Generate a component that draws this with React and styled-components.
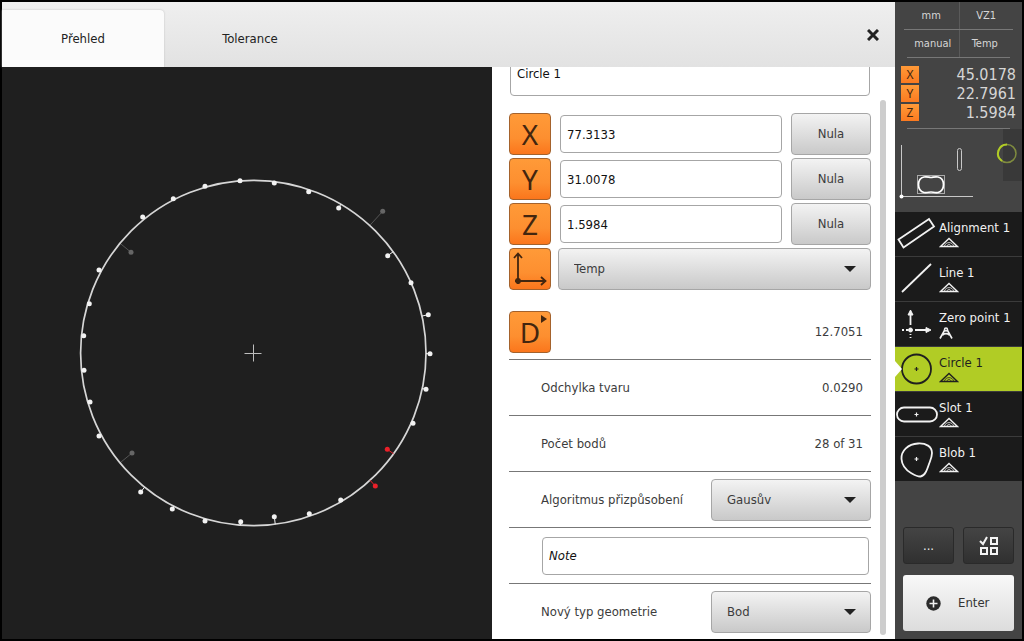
import React, { useState } from "react";
import styled, { createGlobalStyle, css } from "styled-components";

const CENTER = { x: 253.3, y: 353 };
const RADIUS = 172.7;

const POINTS = [
  [240, 180.7], [205, 186.3], [173.3, 198.7], [142.7, 217], [99, 270],
  [89.3, 303.7], [83.7, 335.7], [84, 370.3], [90, 402], [99, 436],
  [140.7, 492], [172.3, 509], [205, 521], [240.7, 521.7], [274.3, 516.7],
  [309.3, 513.7], [340.7, 500], [413, 423.3], [426, 389.3], [430, 353.7],
  [428.3, 314.7], [411, 282.7], [387.7, 255.7], [338.7, 208],
  [308.7, 191.7], [274.3, 183],
];
const IGNORED = [[131, 252.3], [132, 453], [382.7, 211.3]];
const OUTLIERS = [[387.3, 449.3], [375.3, 486]];

const Point = ({ at: [x, y], color, stem }) => {
  const angle = Math.atan2(y - CENTER.y, x - CENTER.x);
  return (
    <g>
      <line
        x1={x}
        y1={y}
        x2={CENTER.x + RADIUS * Math.cos(angle)}
        y2={CENTER.y + RADIUS * Math.sin(angle)}
        stroke={stem || color}
      />
      <circle cx={x} cy={y} r="2.5" fill={color} />
    </g>
  );
};

const Plot = () => (
  <svg viewBox="2 67 490 572" width="100%" height="100%" role="img" aria-label="Circle 1">
    {IGNORED.map((p) => (
      <Point key={p} at={p} color="#666" stem="#555" />
    ))}
    <circle cx={CENTER.x} cy={CENTER.y} r={RADIUS} fill="none" stroke="#d6d6d6" strokeWidth="1.7" />
    {POINTS.map((p) => (
      <Point key={p} at={p} color="#f2f2f2" />
    ))}
    {OUTLIERS.map((p) => (
      <Point key={p} at={p} color="#ea2029" />
    ))}
    <path d="M244.5 353.5h17M253.5 344.5v17" stroke="#bdbdbd" />
  </svg>
);

const MiniMap = () => (
  <Map viewBox="0 0 127 83" aria-hidden="true">
    <rect x="108" y="0" width="19" height="52" fill="#393939" />
    <path d="M6.5 16v50M6 67.5h72" stroke="#c8c8c8" fill="none" />
    <circle cx="6.5" cy="67.5" r="2" fill="#fff" />
    <rect x="62.5" y="19.500" width="4" height="22" rx="2" fill="none" stroke="#c8c8c8" />
    <rect x="22.5" y="46.5" width="27" height="18" fill="none" stroke="#aaa" />
    <path
      d="M29 48c3-.8 5 .5 7 .5s4-1.300 7-.5c4 1 5.500 4 5.500 7.500s-1.500 7-5.500 8c-3 .5-5-.5-7-.5s-4 1-7 .5c-4-1-5.500-4.500-5.500-8S25 49 29 48Z"
      fill="none"
      stroke="#fff"
      strokeWidth="1.700"
    />
    <circle cx="112" cy="24.500" r="9" fill="none" stroke="#7f8b3f" strokeWidth="1.500" />
    <path d="M112 15.500a9 9 0 0 0-5 16.500" fill="none" stroke="#b1cc25" strokeWidth="2" />
  </Map>
);

const SHAPES = {
  alignment: <path d="M3.5 27.5 34 7l5 7.500L8.500 35.500Z" />,
  line: <path d="M7 35 36 7" />,
  zero: (
    <>
      <path d="M15.500 23V10M20 28h14M7 28h2M11 28h2M15.500 32v1M15.500 35v1" />
      <path d="m13 13 2.500-5 2.500 5ZM31 25.500l5 2.500-5 2.500Z" fill="currentColor" strokeWidth="1" />
      <circle cx="15.500" cy="28" r="2" fill="currentColor" strokeWidth="1" />
    </>
  ),
  circle: (
    <>
      <circle cx="21.500" cy="22" r="14.500" />
      <path d="M19.500 22h4M21.500 20v4" strokeWidth="1.200" />
    </>
  ),
  slot: (
    <>
      <rect x="2" y="15.500" width="40" height="14" rx="7" />
      <path d="M19.500 22.500h4M21.500 20.500v4" strokeWidth="1.200" />
    </>
  ),
  blob: (
    <>
      <path d="M6.500 22C6 14 13 7 23 6.500c8-.5 14 3 14 9.500 0 4-1 6-3 11-2 6-4 12-8.500 12.500-3 .3-6-1.500-9.500-3.500-5-3-9-6.500-9.500-14Z" />
      <path d="M19.500 22h4M21.500 20v4" strokeWidth="1.200" />
    </>
  ),
};

const MeasuredIcon = () => (
  <svg width="20" height="11" viewBox="0 0 20 11" fill="none" stroke="currentColor" aria-hidden="true">
    <path d="M1.500 9.500 10 1.500l8.500 8Z" strokeWidth="1.400" />
    <path d="M5.500 9c1-4.500 8-4.500 9 0M8 9c.5-2 3.500-2 4 0" strokeWidth=".8" />
  </svg>
);

const CompassIcon = () => (
  <svg width="14" height="12" viewBox="0 0 14 12" fill="none" stroke="currentColor" aria-hidden="true">
    <path d="m1 11.500 5-9M13 11.500l-5-9M3.500 8c2-1.500 5-1.500 7 0" strokeWidth="1.600" />
    <circle cx="7" cy="2.500" r="1.500" strokeWidth="1.500" />
  </svg>
);

const FEATURES = [
  { name: "Alignment 1", shape: "alignment" },
  { name: "Line 1", shape: "line" },
  { name: "Zero point 1", shape: "zero" },
  { name: "Circle 1", shape: "circle" },
  { name: "Slot 1", shape: "slot" },
  { name: "Blob 1", shape: "blob" },
];

const Select = ({ id, label, value }) => (
  <SelectBox>
    <select id={id} aria-label={label} defaultValue={value}>
      <option>{value}</option>
    </select>
    <svg width="12" height="6" viewBox="0 0 12 6" aria-hidden="true">
      <path d="M0 0h12L6 6Z" fill="#222" />
    </svg>
  </SelectBox>
);

const Details = () => {
  const [coords, setCoords] = useState({ X: "77.3133", Y: "31.0078", Z: "1.5984" });

  return (
    <Form onSubmit={(e) => e.preventDefault()}>
      <Fields>
        <NameInput aria-label="Name" defaultValue="Circle 1" />

        <Coordinates>
          {Object.keys(coords).map((axis) => (
            <CoordRow key={axis}>
              <Tile as="label" htmlFor={`axis-${axis}`}>
                {axis}
              </Tile>
              <TextInput
                id={`axis-${axis}`}
                value={coords[axis]}
                onChange={(e) => setCoords({ ...coords, [axis]: e.target.value })}
              />
              <LightButton
                type="button"
                onClick={() => setCoords({ ...coords, [axis]: "0.0000" })}>
                Nula
              </LightButton>
            </CoordRow>
          ))}
          <SystemRow>
            <Tile as="label" htmlFor="system">
              <svg width="40" height="40" viewBox="0 0 40 40" fill="none" stroke="#43260f" strokeWidth="1.800" aria-hidden="true">
                <path d="M8 35V5M4 9l4-4.500L12 9M5 32h30M31 28l4.500 4L31 36" />
                <circle cx="8" cy="32" r="2" fill="#43260f" />
              </svg>
            </Tile>
            <Select id="system" label="Temp" value="Temp" />
          </SystemRow>
        </Coordinates>

        <DiameterRow>
          <Tile type="button">
            D
            <TileArrow viewBox="0 0 6 8" aria-hidden="true">
              <path d="M0 0 6 4 0 8Z" fill="#43260f" />
            </TileArrow>
          </Tile>
          <Value>12.7051</Value>
        </DiameterRow>
        <Row>
          <span>Odchylka tvaru</span>
          <Value>0.0290</Value>
        </Row>
        <Row>
          <span>Počet bodů</span>
          <Value>28 of 31</Value>
        </Row>
        <Row>
          <label htmlFor="fit">Algoritmus přizpůsobení</label>
          <Select id="fit" value="Gausův" />
        </Row>
        <Row>
          <NoteInput aria-label="Note" placeholder="Note" />
        </Row>
        <Row>
          <label htmlFor="geometry">Nový typ geometrie</label>
          <Select id="geometry" value="Bod" />
        </Row>
      </Fields>
      <ScrollThumb />
    </Form>
  );
};

const Sidebar = () => {
  const [active, setActive] = useState("Circle 1");

  return (
    <Side>
      <Status>
        <button>mm</button>
        <button>VZ1</button>
      </Status>
      <Status $inset>
        <button>manual</button>
        <button>Temp</button>
      </Status>

      <Positions>
        <dt>X</dt>
        <dd>45.0178</dd>
        <dt>Y</dt>
        <dd>22.7961</dd>
        <dt>Z</dt>
        <dd>1.5984</dd>
      </Positions>
      <MiniMap />

      <FeatureList>
        {FEATURES.map(({ name, shape }) => (
          <li key={name}>
            <Feature $active={name === active} onClick={() => setActive(name)}>
              <svg width="44" height="44" viewBox="0 0 44 44" fill="none" stroke="currentColor" strokeWidth="1.800" aria-hidden="true">
                {SHAPES[shape]}
              </svg>
              <FeatureText>
                {name}
                {shape === "zero" ? <CompassIcon /> : <MeasuredIcon />}
              </FeatureText>
            </Feature>
          </li>
        ))}
      </FeatureList>

      <Actions>
        <DarkButton>...</DarkButton>
        <DarkButton aria-label="Select features">
          <svg width="20" height="20" viewBox="0 0 20 20" fill="none" stroke="#f4f4f4" strokeWidth="2" aria-hidden="true">
            <path d="m1 5 3 3 4-7" />
            <path d="M12 2h6v6h-6ZM2 12h6v6H2ZM12 12h6v6h-6Z" />
          </svg>
        </DarkButton>
        <EnterButton>
          <svg width="15" height="15" viewBox="0 0 15 15" aria-hidden="true">
            <circle cx="7.500" cy="7.500" r="7.200" fill="#2b2b2b" />
            <path d="M3.500 7.500h8M7.500 3.500v8" stroke="#f2f2f2" strokeWidth="1.600" />
          </svg>
          Enter
        </EnterButton>
      </Actions>
    </Side>
  );
};

const App = () => {
  const [tab, setTab] = useState("Přehled");

  return (
    <>
      <GlobalStyle />
      <Screen>
        <Dialog>
          <Header>
            {["Přehled", "Tolerance"].map((name) => (
              <Tab key={name} $active={tab === name} onClick={() => setTab(name)}>
                {name}
              </Tab>
            ))}
            <Close aria-label="Close">
              <svg width="12" height="12" viewBox="0 0 12 12" aria-hidden="true">
                <path d="m1 1 10 10M11 1 1 11" stroke="#222" strokeWidth="3" />
              </svg>
            </Close>
          </Header>
          <Body>
            <View>
              <Plot />
            </View>
            <Details />
          </Body>
        </Dialog>
        <Sidebar />
      </Screen>
    </>
  );
};

const GlobalStyle = createGlobalStyle`
  * {
    box-sizing: border-box;
  }

  body {
    margin: 0;
    background: #000;
    color: #3c3c3c;
    font: 13px/18px "DejaVu Sans Condensed", "Noto Sans", sans-serif;
  }

  button, input, select {
    margin: 0;
    color: inherit;
    font: inherit;
  }

  svg {
    display: block;
  }
`;

const lightSurface = css`
  background: linear-gradient(#f3f3f3, #dedede 50%, #c9c9c9);
  border: 1px solid #a6a6a6;
  border-radius: 4px;
`;

const Screen = styled.div`
  display: grid;
  grid-template-columns: 1fr 127px;
  height: 100vh;
  border: 2px solid #000;
`;

const Dialog = styled.main`
  display: flex;
  flex-direction: column;
  min-width: 0;
  min-height: 0;
`;

const Header = styled.header`
  display: flex;
  align-items: flex-end;
  flex: none;
  height: 65px;
  background: linear-gradient(#efefef, #e2e2e2);
`;

const Tab = styled.button`
  width: ${(p) => (p.$active ? 162 : 172)}px;
  height: 57px;
  padding: 0;
  border: 0;
  border-radius: 0 4px 0 0;
  background: ${(p) => (p.$active ? "#fbfbfb" : "transparent")};
  box-shadow: ${(p) => (p.$active ? "0 0 2px #bbb" : "none")};
  color: #222;
`;

const Close = styled.button`
  align-self: center;
  margin-left: auto;
  padding: 16px;
  border: 0;
  background: none;
`;

const Body = styled.div`
  display: flex;
  flex: 1;
  min-height: 0;
`;

const View = styled.section`
  flex: 1;
  min-width: 0;
  background: #1f1f1f;
`;

const Form = styled.form`
  display: flex;
  flex: none;
  width: 403px;
  padding: 0 9px 0 17px;
  background: #fff;
`;

/* scrolled to the end, so the content hangs from the bottom edge */
const Fields = styled.div`
  display: flex;
  flex: 1;
  flex-direction: column;
  justify-content: flex-end;
  overflow: hidden;

  > * {
    flex: none;
  }
`;

const ScrollThumb = styled.div`
  width: 6px;
  margin: 33px 0 4px 9px;
  border-radius: 3px;
  background: #cdcdcd;
`;

const TextInput = styled.input`
  width: 100%;
  height: 38px;
  padding: 0 6px;
  border: 1px solid #a6a6a6;
  border-radius: 4px;
  background: #fff;
  color: #111;
`;

const NameInput = styled(TextInput)`
  width: auto;
  height: 45px;
  margin: 0 1px 17px;
`;

const NoteInput = styled(TextInput)`
  margin: 0 2px 0 1px;

  &::placeholder {
    color: #111;
    font-style: italic;
    opacity: 1;
  }
`;

const Coordinates = styled.div`
  display: grid;
  gap: 3px;
  margin-bottom: 21px;
`;

const CoordRow = styled.div`
  display: grid;
  grid-template-columns: 42px 1fr 80px;
  align-items: center;
  gap: 9px;
`;

const SystemRow = styled.div`
  display: grid;
  grid-template-columns: 42px 1fr;
  gap: 7px;
`;

const Tile = styled.button`
  position: relative;
  display: flex;
  align-items: center;
  justify-content: center;
  width: 42px;
  height: 42px;
  padding: 0;
  border: 1px solid #a4622c;
  border-radius: 4px;
  background: linear-gradient(#ff9a38, #fd8f30 60%, #fb761c);
  color: #43260f;
  font: 28px/40px "Noto Sans", sans-serif;
`;

const TileArrow = styled.svg`
  position: absolute;
  top: 3px;
  right: 3px;
  width: 6px;
  height: 8px;
`;

const LightButton = styled.button`
  ${lightSurface}
  height: 42px;
  padding: 0;
`;

const SelectBox = styled.div`
  position: relative;

  select {
    ${lightSurface}
    display: block;
    width: 100%;
    height: 42px;
    padding: 0 32px 0 15px;
    appearance: none;
  }

  svg {
    position: absolute;
    top: 18px;
    right: 15px;
    pointer-events: none;
  }
`;

const Row = styled.div`
  display: flex;
  align-items: center;
  justify-content: space-between;
  height: 56px;
  padding-left: 32px;
  border-top: 1px solid #777;

  ${SelectBox} {
    width: 160px;
  }
`;

const DiameterRow = styled.div`
  display: flex;
  align-items: center;
  justify-content: space-between;
  padding-bottom: 6px;
`;

const Value = styled.output`
  padding-right: 8px;
`;

const Side = styled.aside`
  display: flex;
  flex-direction: column;
  min-height: 0;
  background: #444;
  color: #d6d6d6;
`;

const Status = styled.div`
  display: grid;
  grid-template-columns: 1fr 1fr;
  margin: 0 ${(p) => (p.$inset ? 12 : 9)}px;
  border-bottom: 1px solid #777;

  button {
    height: 27px;
    padding: 0;
    border: 0;
    background: none;
    font-size: 11px;
  }

  button + button {
    border-left: 1px solid #5a5a5a;
  }
`;

const Positions = styled.dl`
  display: grid;
  grid-template-columns: 18px 1fr;
  align-items: center;
  row-gap: 2px;
  margin: 8px 6px 0;

  dt {
    height: 17px;
    background: linear-gradient(#ff9a38, #fb7a20);
    color: #43260f;
    font: 12px/17px "Noto Sans", sans-serif;
    text-align: center;
  }

  dd {
    margin: 0;
    font-size: 16px;
    line-height: 17px;
    text-align: right;
  }

  &::after {
    content: "";
    grid-column: 1 / -1;
    height: 1px;
    margin: 5px 6px 0;
    background: #777;
  }
`;

const Map = styled.svg`
  flex: none;
  width: 127px;
  height: 83px;
`;

const FeatureList = styled.ul`
  display: grid;
  gap: 1px;
  margin: 0;
  padding: 0;
  background: #3b3b3b;
  list-style: none;
`;

const Feature = styled.button`
  position: relative;
  display: flex;
  width: 100%;
  height: 44px;
  padding: 0;
  border: 0;
  background: ${(p) => (p.$active ? "#b1cc25" : "#1b1b1b")};
  color: ${(p) => (p.$active ? "#1f1f1f" : "#f2f2f2")};
  text-align: left;

  ${(p) =>
    p.$active &&
    css`
      &::before {
        content: "";
        position: absolute;
        top: 14px;
        left: 0;
        border: 8px solid transparent;
        border-left: 7px solid #fff;
        border-right: 0;
      }
    `}
`;

const FeatureText = styled.span`
  display: flex;
  flex-direction: column;
  padding-top: 7px;
`;

const Actions = styled.div`
  display: grid;
  grid-template-columns: 1fr 1fr;
  gap: 11px 9px;
  margin-top: auto;
  padding: 8px;
`;

const DarkButton = styled.button`
  display: flex;
  align-items: center;
  justify-content: center;
  height: 37px;
  padding: 0;
  border: 1px solid #2a2a2a;
  border-radius: 3px;
  background: linear-gradient(#444, #303030);
  color: #eee;
`;

const EnterButton = styled.button`
  display: flex;
  grid-column: 1 / -1;
  align-items: center;
  gap: 17px;
  height: 56px;
  padding: 0 23px;
  border: 0;
  border-radius: 3px;
  background: linear-gradient(#f8f8f8, #dcdcdc);
  color: #333;
`;

export default App;
